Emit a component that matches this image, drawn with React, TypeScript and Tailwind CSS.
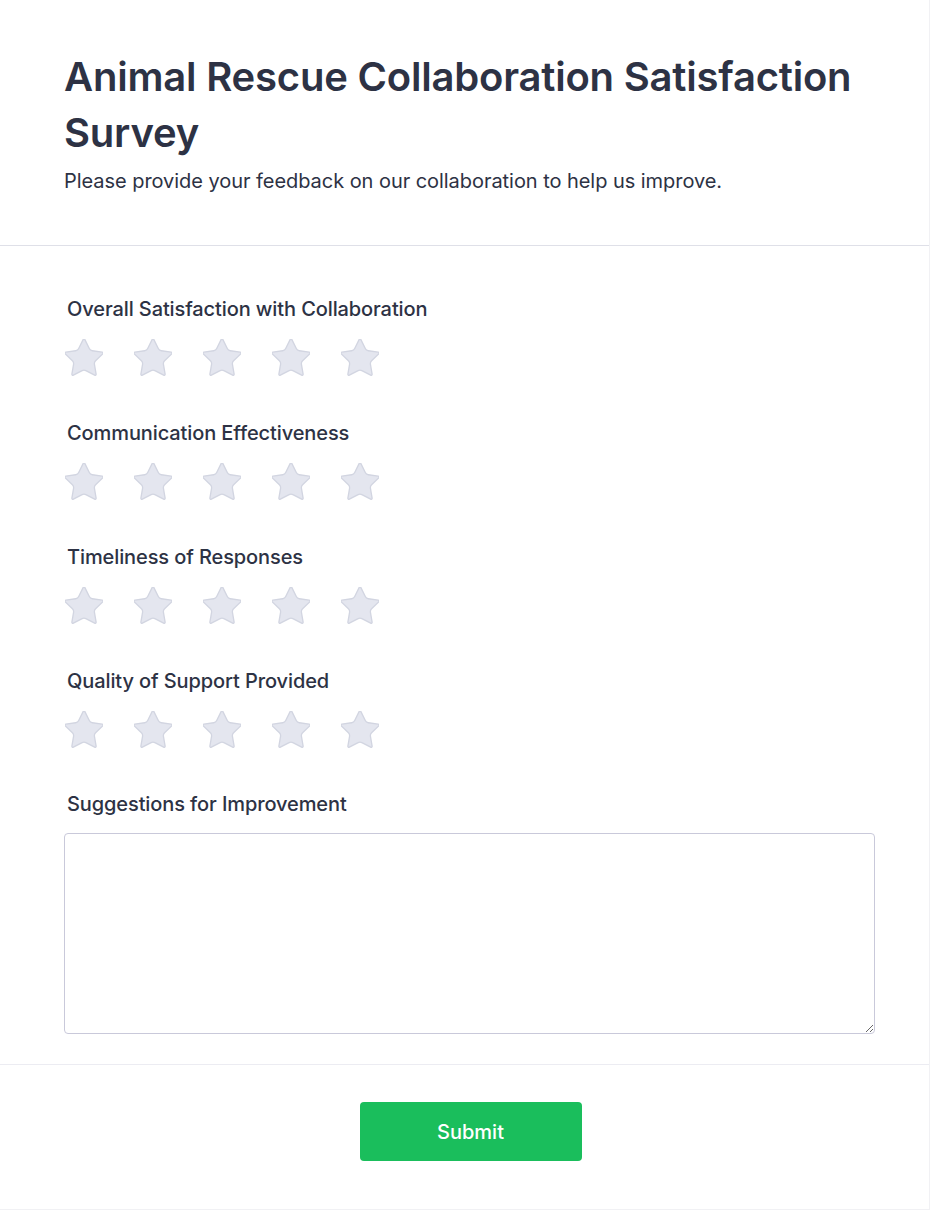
import React from "react";

const StarIcon = () => (
  <svg width="38" height="37" viewBox="2 2 20 19.4" fill="#e4e6ef" stroke="#d2d5e1" strokeWidth="0.7" strokeLinejoin="round">
    <path d="M11.525 2.295a.53.53 0 0 1 .95 0l2.31 4.679a2.123 2.123 0 0 0 1.595 1.16l5.166.756a.53.53 0 0 1 .294.904l-3.736 3.638a2.123 2.123 0 0 0-.611 1.878l.882 5.14a.53.53 0 0 1-.771.56l-4.618-2.428a2.122 2.122 0 0 0-1.973 0L6.396 21.01a.53.53 0 0 1-.77-.56l.881-5.139a2.122 2.122 0 0 0-.611-1.879L2.16 9.795a.53.53 0 0 1 .294-.906l5.165-.755a2.122 2.122 0 0 0 1.597-1.16z" />
  </svg>
);

const questions = [
  "Overall Satisfaction with Collaboration",
  "Communication Effectiveness",
  "Timeliness of Responses",
  "Quality of Support Provided",
];

export default function App() {
  return (
    <div className="min-h-screen bg-white" style={{ fontFamily: "Inter, 'Noto Sans', sans-serif" }}>
      <div className="w-[930px] bg-white border-r border-b border-[#f1f1f4] text-[#2d3244]">
        <header className="px-16 pt-[49px] pb-[50px] border-b border-[#dfe0e8]">
          <h1 className="text-[40px] leading-[56px] font-semibold tracking-[-0.2px]">
            Animal Rescue Collaboration Satisfaction Survey
          </h1>
          <p className="text-xl leading-7 mt-[6px] tracking-[-0.05px]">
            Please provide your feedback on our collaboration to help us improve.
          </p>
        </header>
        <main className="px-16 pt-[49px] pb-[30px] border-b border-[#ececf2]">
          {questions.map((q) => (
            <div key={q} className="mb-[43px]">
              <div className="text-xl leading-7 font-medium pl-[3px] tracking-[-0.1px]">{q}</div>
              <div className="flex gap-[31px] mt-[16px] pl-[1px]">
                {[0, 1, 2, 3, 4].map((i) => (
                  <StarIcon key={i} />
                ))}
              </div>
            </div>
          ))}
          <div className="text-xl leading-7 font-medium pl-[3px] -mt-[1px] tracking-[-0.1px]">Suggestions for Improvement</div>
          <textarea className="mt-[15px] block w-[811px] h-[201px] border border-[#c9c9da] rounded-[4px] resize-y" />
        </main>
        <footer className="flex justify-center pl-[12px] pt-[37px] pb-[48px]">
          <button className="w-[222px] h-[59px] rounded-[4px] bg-[#1abe5c] text-white text-xl font-medium">
            Submit
          </button>
        </footer>
      </div>
    </div>
  );
}
